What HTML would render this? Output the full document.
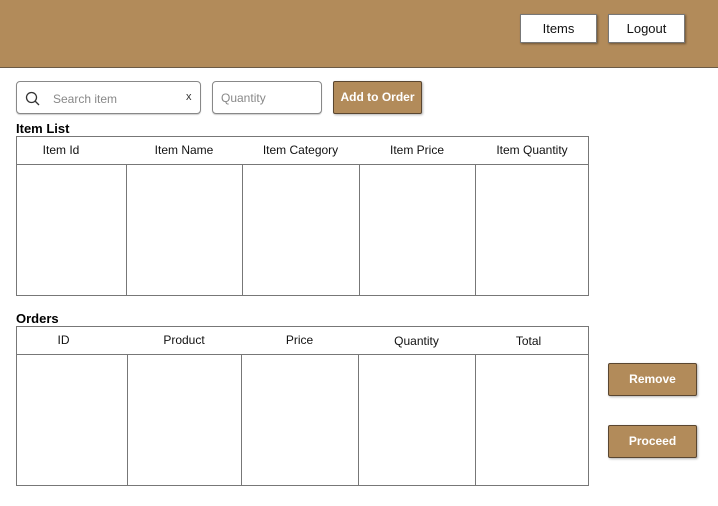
<!DOCTYPE html>
<html><head><style>
body{margin:0;width:718px;height:506px;background:#fff;font-family:"Liberation Sans",sans-serif;position:relative;overflow:hidden}
.a{position:absolute;box-sizing:border-box}
.hdr{left:0;top:0;width:718px;height:68px;background:#b28b5a;border-bottom:1px solid #6b5a45}
.wb{background:#fff;border:1px solid #777;box-shadow:1px 1px 2px rgba(0,0,0,.4);font-size:13px;color:#111;text-align:center}
.in{background:#fff;border:1px solid #888;border-radius:4px;font-size:12px;color:#888;box-shadow:0 1px 1px rgba(0,0,0,.2)}
.bb{background:#b28b5a;border:1px solid #5a4630;border-radius:2px;color:#fff;font-weight:bold;font-size:12px;text-align:center;box-shadow:1px 1px 2px rgba(0,0,0,.3)}
.lbl{font-weight:bold;font-size:13px;color:#000}
.tbl{border:1px solid #777}
.v{width:1px;background:#777}
.h{height:1px;background:#777}
.th{font-size:12px;color:#111;text-align:center}
</style></head><body>
<div class="a hdr"></div>
<div class="a wb" style="left:520px;top:14px;width:77px;height:29px;line-height:27px">Items</div>
<div class="a wb" style="left:608px;top:14px;width:77px;height:29px;line-height:27px">Logout</div>

<div class="a in" style="left:16px;top:81px;width:185px;height:33px">
<svg class="a" style="left:8px;top:9px" width="16" height="16" viewBox="0 0 16 16"><circle cx="6.5" cy="6.5" r="5" fill="none" stroke="#333" stroke-width="1.3"/><line x1="10" y1="10" x2="14" y2="14" stroke="#333" stroke-width="1.3"/></svg>
<span class="a" style="left:36px;top:10px">Search item</span>
<span class="a" style="left:169px;top:9px;color:#333;font-size:11px">x</span>
</div>
<div class="a in" style="left:212px;top:81px;width:110px;height:33px"><span class="a" style="left:8px;top:9px">Quantity</span></div>
<div class="a bb" style="left:333px;top:81px;width:89px;height:33px;line-height:31px">Add to Order</div>

<div class="a lbl" style="left:16px;top:121px">Item List</div>
<div class="a tbl" style="left:16px;top:136px;width:573px;height:160px"></div>
<div class="a h" style="left:16px;top:164px;width:573px"></div>
<div class="a v" style="left:126px;top:164px;height:131px"></div>
<div class="a v" style="left:242px;top:164px;height:131px"></div>
<div class="a v" style="left:359px;top:164px;height:131px"></div>
<div class="a v" style="left:475px;top:164px;height:131px"></div>
<div class="a th" style="left:16px;top:143px;width:90px">Item Id</div>
<div class="a th" style="left:126px;top:143px;width:116px">Item Name</div>
<div class="a th" style="left:242px;top:143px;width:117px">Item Category</div>
<div class="a th" style="left:359px;top:143px;width:116px">Item Price</div>
<div class="a th" style="left:475px;top:143px;width:114px">Item Quantity</div>

<div class="a lbl" style="left:16px;top:311px">Orders</div>
<div class="a tbl" style="left:16px;top:326px;width:573px;height:160px"></div>
<div class="a h" style="left:16px;top:354px;width:573px"></div>
<div class="a v" style="left:127px;top:354px;height:131px"></div>
<div class="a v" style="left:241px;top:354px;height:131px"></div>
<div class="a v" style="left:358px;top:354px;height:131px"></div>
<div class="a v" style="left:475px;top:354px;height:131px"></div>
<div class="a th" style="left:16px;top:333px;width:95px">ID</div>
<div class="a th" style="left:127px;top:333px;width:114px">Product</div>
<div class="a th" style="left:241px;top:333px;width:117px">Price</div>
<div class="a th" style="left:358px;top:334px;width:117px">Quantity</div>
<div class="a th" style="left:475px;top:334px;width:107px">Total</div>

<div class="a bb" style="left:608px;top:363px;width:89px;height:33px;line-height:31px">Remove</div>
<div class="a bb" style="left:608px;top:425px;width:89px;height:33px;line-height:31px">Proceed</div>
</body></html>
